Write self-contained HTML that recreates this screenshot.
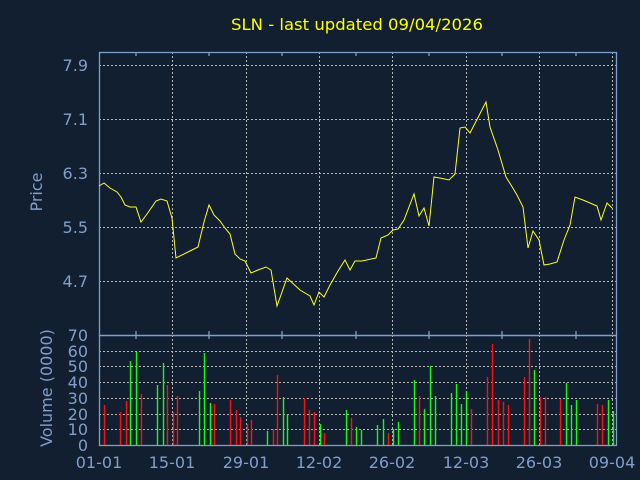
<!DOCTYPE html>
<html><head><meta charset="utf-8"><style>
html,body{margin:0;padding:0;background:#111f30;}
svg{display:block}
text{font-family:"DejaVu Sans","Liberation Sans",sans-serif;}
</style></head><body>
<svg width="640" height="480" viewBox="0 0 640 480" xmlns="http://www.w3.org/2000/svg">
<rect width="640" height="480" fill="#111f30"/>
<text x="357" y="30" fill="#ffff00" font-size="16" text-anchor="middle" textLength="252" lengthAdjust="spacingAndGlyphs">SLN - last updated 09/04/2026</text>
<g stroke="#b8b8b8" stroke-width="1" stroke-dasharray="2,2" fill="none">
<path d="M99 65.5H617M99 119.5H617M99 173.5H617M99 227.5H617M99 281.5H617"/>
<path d="M172.5 52V335M246.5 52V335M319.5 52V335M392.5 52V335M466.5 52V335M539.5 52V335M612.5 52V335"/>
<path d="M99 351.5H617M99 366.5H617M99 382.5H617M99 398.5H617M99 414.5H617M99 429.5H617"/>
<path d="M172.5 335V445M246.5 335V445M319.5 335V445M392.5 335V445M466.5 335V445M539.5 335V445M612.5 335V445"/>
</g>
<g stroke="#7f9fcc" stroke-width="1.3" fill="none">
<rect x="99.5" y="52.5" width="517" height="283"/>
<rect x="99.5" y="335.5" width="517" height="110"/>
<path d="M136 52v4M209 52v4M282 52v4M356 52v4M429 52v4M502 52v4M576 52v4M136 335v-4M209 335v-4M282 335v-4M356 335v-4M429 335v-4M502 335v-4M576 335v-4M136 335v4M209 335v4M282 335v4M356 335v4M429 335v4M502 335v4M576 335v4"/>
</g>
<polyline fill="none" stroke="#ffff20" stroke-width="1" points="99,186 104,183 110,188 117,192 121,197 125,205 130,207 136,207 141,222 147,214 156,201 161,199 167,201 172,218 176,258 190,251 198,247 204,222 209,205 214,215 220,221 225,228 230,234 235,254 240,259 245,261 251,273 258,270 266,267 271,270 277,306 287,278 300,290 305,293 310,296 314,305 319,292 324,297 330,285 338,271 345,260 350,270 355,261 362,261 376,258 381,238 388,235 393,230 398,229 404,220 414,194 419,216 424,208 429,226 434,177 440,178 449,180 455,174 460,128 465,127 470,133 486,102 490,127 498,150 506,177 511,185 517,195 523,207 528,248 533,231 539,240 544,265 550,264 557,262 564,240 570,225 575,197 583,200 597,206 601,220 607,203 612,208"/>
<g stroke="#ff1010" stroke-width="1.4">
<path d="M104.5 445V405M120.5 445V412M126.5 445V401M141.5 445V394M167.5 445V385M173.5 445V412M177.5 445V396M214.5 445V404M230.5 445V400M236.5 445V410M240.5 445V417M247.5 445V424M251.5 445V420M273.5 445V429M277.5 445V375M304.5 445V398M309.5 445V410M314.5 445V412M324.5 445V433M351.5 445V418M388.5 445V433M419.5 445V396M471.5 445V409M487.5 445V377M492.5 445V344M498.5 445V400M503.5 445V402M508.5 445V405M524.5 445V377M529.5 445V339M540.5 445V397M545.5 445V397M560.5 445V399M597.5 445V404M602.5 445V405"/>
</g>
<g stroke="#10ff10" stroke-width="1.4">
<path d="M130.5 445V361M136.5 445V352M157.5 445V385M163.5 445V363M199.5 445V391M204.5 445V353M210.5 445V403M267.5 445V431M283.5 445V397M287.5 445V414M320.5 445V424M346.5 445V410M356.5 445V427M361.5 445V430M377.5 445V425M383.5 445V419M393.5 445V429M398.5 445V422M414.5 445V380M424.5 445V409M430.5 445V366M435.5 445V396M451.5 445V393M456.5 445V384M461.5 445V404M466.5 445V391M534.5 445V370M566.5 445V383M571.5 445V405M576.5 445V400M608.5 445V400M613.5 445V411"/>
</g>
<g fill="#7f9fcc" font-size="16" text-anchor="end">
<text x="88" y="71">7.9</text>
<text x="88" y="125">7.1</text>
<text x="88" y="179">6.3</text>
<text x="88" y="233">5.5</text>
<text x="88" y="287">4.7</text>
<text x="88" y="341">70</text>
<text x="88" y="357">60</text>
<text x="88" y="372">50</text>
<text x="88" y="388">40</text>
<text x="88" y="404">30</text>
<text x="88" y="420">20</text>
<text x="88" y="435">10</text>
<text x="88" y="451">0</text>
</g>
<g fill="#7f9fcc" font-size="16" text-anchor="middle">
<text x="99" y="468">01-01</text>
<text x="172" y="468">15-01</text>
<text x="246" y="468">29-01</text>
<text x="319" y="468">12-02</text>
<text x="392" y="468">26-02</text>
<text x="466" y="468">12-03</text>
<text x="539" y="468">26-03</text>
<text x="612" y="468">09-04</text>
<text transform="translate(42,192) rotate(-90)">Price</text>
<text transform="translate(52,388) rotate(-90)">Volume (0000)</text>
</g>
</svg>
</body></html>
